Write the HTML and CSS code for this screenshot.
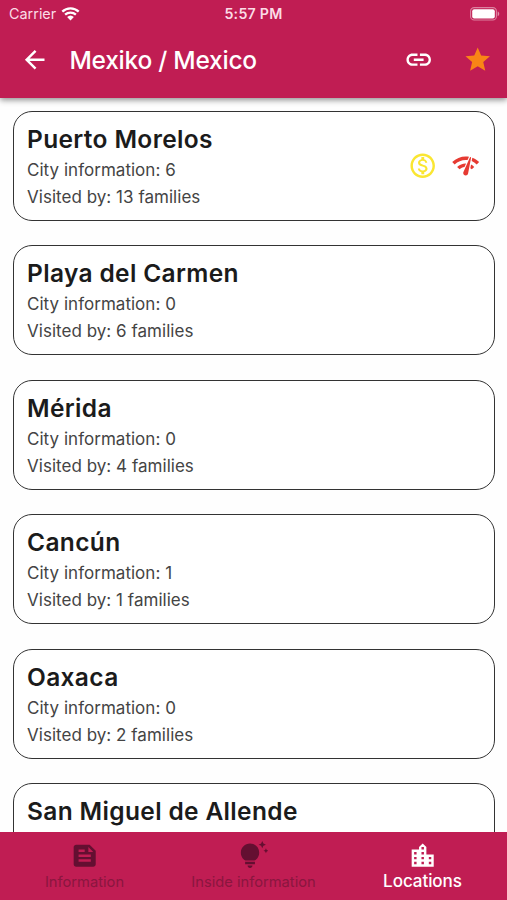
FILE: index.html
```html
<!DOCTYPE html>
<html lang="en">
<head>
<meta charset="utf-8">
<title>Mexiko / Mexico</title>
<link rel="stylesheet" href="styles.css">
</head>
<body>
<div class="app">
  <header class="header">
    <div class="status">
      <div class="carrier"><span>Carrier</span>
        <svg class="wifi" viewBox="0 0 18 14"><path d="M.8 4.7a12 12 0 0 1 16.4 0M3.6 7.7a7.9 7.9 0 0 1 10.8 0" fill="none" stroke="currentColor" stroke-width="2.3"/><path d="M5.6 10a5 5 0 0 1 6.8 0L9 13.4z" fill="currentColor"/></svg>
      </div>
      <span class="clock">5:57 PM</span>
      <svg class="battery" viewBox="0 0 30 14"><rect x=".6" y=".6" width="25.8" height="12.4" rx="3.6" fill="none" stroke="#fff" stroke-opacity=".45" stroke-width="1.1"/><rect x="2.2" y="2.2" width="22.6" height="9.2" rx="2" fill="#fff"/><path d="M27.7 4.5c2 .7 2 4 0 4.7z" fill="#fff" fill-opacity=".5"/></svg>
    </div>
    <div class="toolbar">
      <svg class="icon back" viewBox="0 0 24 24"><path d="M20 11H7.83l5.59-5.59L12 4l-8 8 8 8 1.41-1.41L7.83 13H20v-2z"/></svg>
      <h1 class="heading">Mexiko / Mexico</h1>
      <svg class="icon link" viewBox="0 0 24 24"><path d="M3.9 12c0-1.71 1.39-3.1 3.1-3.1h4V7H7c-2.76 0-5 2.24-5 5s2.24 5 5 5h4v-1.9H7c-1.71 0-3.1-1.39-3.1-3.1zM8 13h8v-2H8v2zm9-6h-4v1.9h4c1.71 0 3.1 1.39 3.1 3.1s-1.39 3.1-3.1 3.1h-4V17h4c2.76 0 5-2.24 5-5s-2.24-5-5-5z"/></svg>
      <svg class="icon star" viewBox="0 0 24 24"><path d="M12 17.27L18.18 21l-1.64-7.03L22 9.24l-7.19-.61L12 2 9.19 8.63 2 9.24l5.46 4.73L5.82 21z"/></svg>
    </div>
  </header>
  <main class="list">
    <article class="card">
      <div class="details"><h2 class="name">Puerto Morelos</h2><p class="line">City information: 6</p><p class="line">Visited by: 13 families</p></div>
      <div class="badges">
        <svg class="icon cost" viewBox="0 0 24 24"><path d="M12 2C6.48 2 2 6.48 2 12s4.480 10 10 10 10-4.480 10-10S17.520 2 12 2zm0 18c-4.410 0-8-3.590-8-8s3.590-8 8-8 8 3.590 8 8-3.590 8-8 8zm.31-8.860c-1.770-.45-2.340-.94-2.340-1.670 0-.84.79-1.430 2.100-1.430 1.380 0 1.900.66 1.940 1.640h1.710c-.05-1.340-.87-2.570-2.490-2.970V5H10.900v1.690c-1.510.32-2.720 1.300-2.720 2.810 0 1.790 1.490 2.690 3.660 3.210 1.950.46 2.340 1.150 2.340 1.870 0 .53-.39 1.390-2.100 1.390-1.600 0-2.230-.72-2.320-1.640H8.040c.1 1.700 1.360 2.660 2.860 2.970V19h2.340v-1.670c1.520-.29 2.720-1.160 2.730-2.770-.01-2.200-1.900-2.960-3.660-3.420z"/></svg>
        <svg class="icon network" viewBox="0 0 24 24"><path d="M15.900 5c-.17 0-.32.09-.41.23l-.07.15-5.180 11.650c-.16.29-.26.61-.26.96 0 1.110.9 2.010 2.010 2.010.96 0 1.770-.68 1.960-1.590l.01-.03L16.400 5.500c0-.28-.22-.5-.5-.5zM1 9l2 2c2.880-2.880 6.790-4.080 10.530-3.620l1.190-2.680C9.890 3.840 4.740 5.270 1 9zm20 2l2-2c-1.640-1.640-3.550-2.820-5.590-3.570l-.53 2.820c1.500.62 2.900 1.530 4.120 2.750zm-4 4l2-2c-.8-.8-1.700-1.420-2.660-1.890l-.55 2.920c.42.27.83.59 1.210.97zM5 13l2 2c1.130-1.130 2.560-1.790 4.030-2l1.280-2.880c-2.630-.08-5.300.87-7.310 2.880z"/></svg>
      </div>
    </article>
    <article class="card"><div class="details"><h2 class="name">Playa del Carmen</h2><p class="line">City information: 0</p><p class="line">Visited by: 6 families</p></div></article>
    <article class="card"><div class="details"><h2 class="name">Mérida</h2><p class="line">City information: 0</p><p class="line">Visited by: 4 families</p></div></article>
    <article class="card"><div class="details"><h2 class="name">Cancún</h2><p class="line">City information: 1</p><p class="line">Visited by: 1 families</p></div></article>
    <article class="card"><div class="details"><h2 class="name">Oaxaca</h2><p class="line">City information: 0</p><p class="line">Visited by: 2 families</p></div></article>
    <article class="card"><div class="details"><h2 class="name">San Miguel de Allende</h2></div></article>
  </main>
  <nav class="tabs">
    <div class="tab"><svg class="icon" viewBox="0 0 24 24"><path d="M16 3H5c-1.100 0-2 .9-2 2v14c0 1.100.9 2 2 2h14c1.100 0 2-.9 2-2V8l-5-5zM7 7h5v2H7V7zm10 10H7v-2h10v2zm0-4H7v-2h10v2zm-2-4V5l4 4h-4z"/></svg><span class="label">Information</span></div>
    <div class="tab"><svg class="icon" viewBox="0 0 24 24"><path d="M7 20h4c0 1.100-.9 2-2 2s-2-.9-2-2zM5 19h8v-2H5v2zM16.500 9.500c0 3.820-2.660 5.860-3.770 6.500H5.270C4.160 15.360 1.500 13.320 1.500 9.500 1.500 5.360 4.860 2 9 2s7.500 3.360 7.500 7.500zM21.370 7.370L20 8l1.370.63L22 10l.63-1.370L24 8l-1.370-.63L22 6zM19 6l.94-2.060L22 3l-2.060-.94L19 0l-.94 2.060L16 3l2.060.94z"/></svg><span class="label">Inside information</span></div>
    <div class="tab active"><svg class="icon" viewBox="0 0 24 24"><path d="M15 11V5l-3-3-3 3v2H3v14h18V11h-6zm-8 8H5v-2h2v2zm0-4H5v-2h2v2zm0-4H5V9h2v2zm6 8h-2v-2h2v2zm0-4h-2v-2h2v2zm0-4h-2V9h2v2zm0-4h-2V5h2v2zm6 12h-2v-2h2v2zm0-4h-2v-2h2v2z"/></svg><span class="label">Locations</span></div>
  </nav>
</div>
</body>
</html>
```
FILE: styles.css
```css
* { box-sizing: border-box; margin: 0; }
body { font-family: Inter, "Liberation Sans", sans-serif; background: #fefefe; color: #1b1b1b; }
.app { height: 900px; display: flex; flex-direction: column; overflow: hidden; }
.header { flex: none; height: 98px; background: #c01d53; color: #fff; box-shadow: 0 2px 6px rgba(0, 0, 0, .45); z-index: 1; }
.status { height: 27px; display: grid; grid-template-columns: 1fr auto 1fr; align-items: center; padding: 0 7px 0 9px; font-size: 14.4px; color: #fbdce6; }
.carrier { display: flex; align-items: center; gap: 5px; }
.wifi { width: 19px; height: 14px; color: #fff; }
.clock { font-weight: 600; font-size: 14.2px; letter-spacing: .25px; margin-left: -2px; }
.battery { width: 30px; height: 14px; justify-self: end; }
.icon { width: 29.4px; height: 29.4px; fill: currentColor; flex: none; display: block; }
.toolbar { height: 66px; display: flex; align-items: center; padding: 0 15px 0 20px; }
.heading { flex: 1; margin-left: 20px; font-size: 24.5px; font-weight: 500; line-height: 30px; letter-spacing: -.24px; white-space: nowrap; }
.link { margin-right: 29px; }
.star { color: #f98516; }
.list { flex: 1; min-height: 0; overflow: hidden; padding: 13px 12px 0 13px; display: flex; flex-direction: column; gap: 24.4px; }
.card { flex: none; height: 110px; border: 1.4px solid #333; border-radius: 19px; padding: 12px 14px 12px 13px; display: flex; justify-content: space-between; align-items: center; background: #fff; }
.details { align-self: flex-start; white-space: nowrap; }
.name { font-size: 24.5px; font-weight: 600; line-height: 31px; letter-spacing: .35px; margin-bottom: 2px; }
.line { font-size: 17px; line-height: 27px; letter-spacing: .03px; color: #444; }
.badges { display: flex; gap: 13px; }
.cost { color: #fae632; }
.network { color: #e63a32; }
.tabs { flex: none; height: 68px; background: #c01d53; display: grid; grid-template-columns: repeat(3, 1fr); color: #640f31; z-index: 1; }
.tab { display: flex; flex-direction: column; align-items: center; padding-top: 9px; white-space: nowrap; }
.label { font-size: 14.7px; line-height: 20px; margin-top: 2px; color: #8a163f; }
.active { color: #fff; }
.active .label { font-size: 17.1px; color: #fff; font-weight: 500; letter-spacing: -.1px; margin-top: 1px; }
```
